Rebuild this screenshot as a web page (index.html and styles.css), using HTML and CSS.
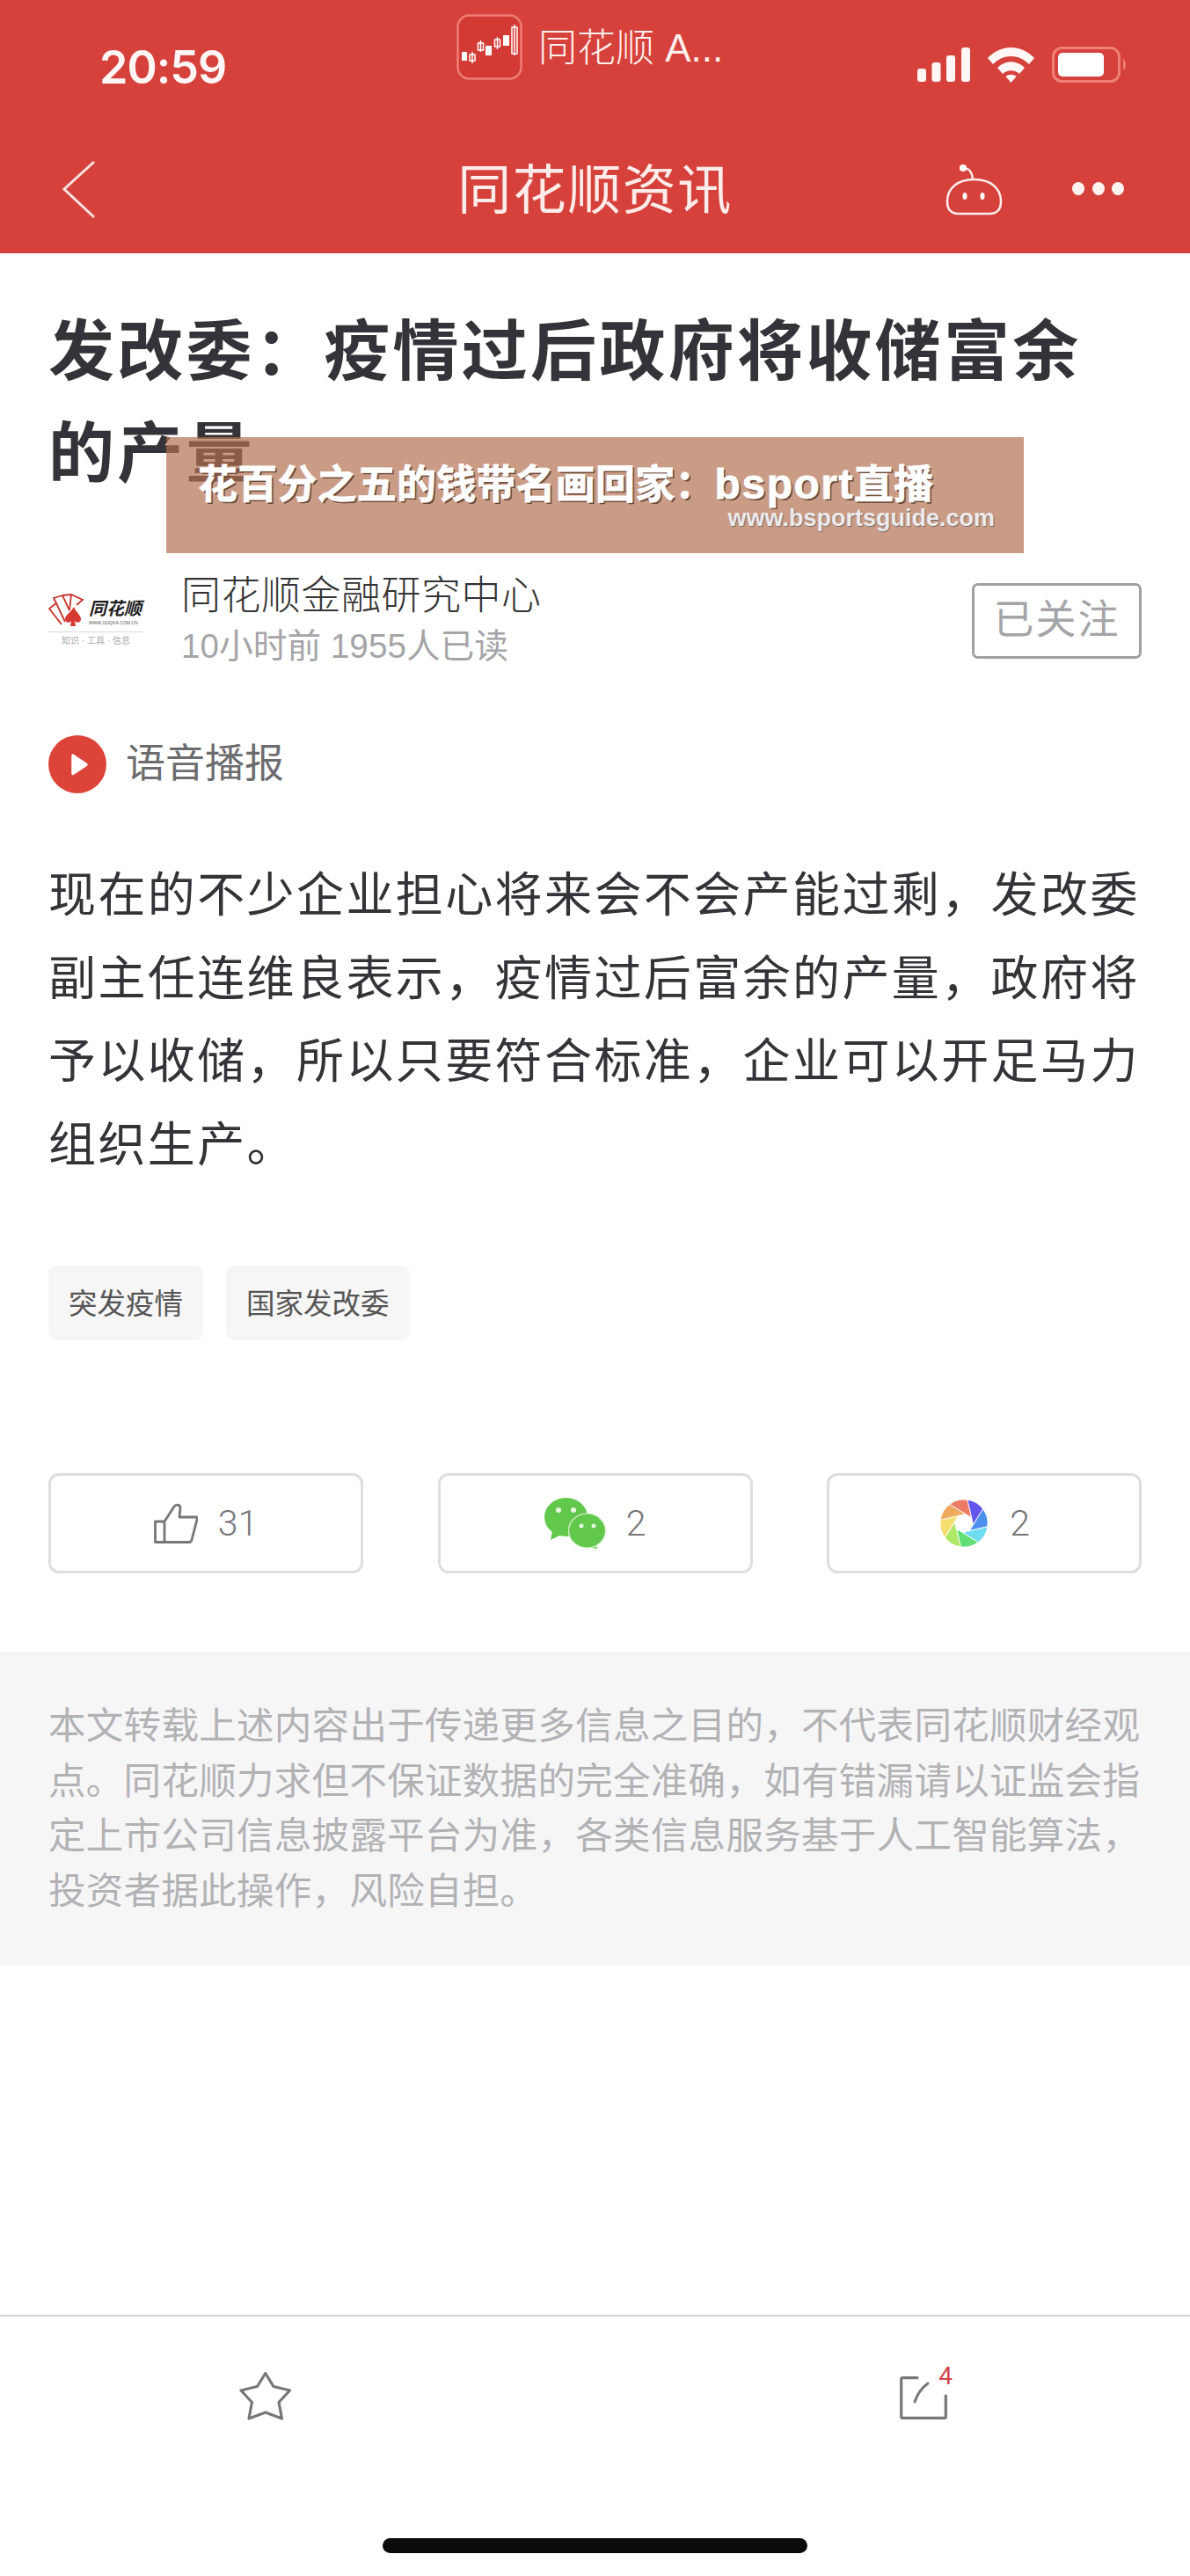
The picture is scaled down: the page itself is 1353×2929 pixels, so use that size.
FILE: index.html
```html
<!DOCTYPE html>
<html lang="zh-CN">
<head>
<meta charset="utf-8">
<title>同花顺资讯</title>
<link rel="stylesheet" href="styles.css">
</head>
<body>
<div class="page">
  <header class="topbar">
    <div class="status">
      <div class="time-cell"><span class="time">20:59</span></div>
      <div class="pip">
        <svg class="pip-icon" viewBox="0 0 75 75">
          <rect x="1.500" y="1.500" width="72" height="72" rx="13" fill="#d43a34" stroke="#ee7d76" stroke-width="2.500"/>
          <g fill="none" stroke="#fff" stroke-width="1.500">
            <path d="M18 43v13M27.500 30v13M46.500 26v14M66 12v35"/>
            <rect x="15" y="46" width="6" height="7"/>
            <rect x="24.500" y="33" width="6" height="8"/>
            <rect x="43.500" y="29" width="6" height="8"/>
            <rect x="63" y="15" width="6" height="30"/>
          </g>
          <g fill="#fff">
            <rect x="6" y="43" width="6" height="10"/>
            <rect x="33" y="36" width="7" height="11"/>
            <rect x="53" y="24" width="7" height="12"/>
          </g>
        </svg>
        <span class="pip-text">同花顺 A...</span>
      </div>
      <div class="status-icons">
        <svg class="signal" viewBox="0 0 60 40"><rect x="0" y="25" width="10" height="15" rx="3"/><rect x="16.500" y="18" width="10" height="22" rx="3"/><rect x="33" y="10" width="10" height="30" rx="3"/><rect x="50" y="1" width="10" height="39" rx="3"/></svg>
        <svg class="wifi" viewBox="0 0 53 41"><path d="M0 13C15-3 38-3 53 13l-6 7C35 8 18 8 6 20Z"/><path d="M11 24c9-9 22-9 31 0l-6 7c-5-5-14-5-19 0Z"/><path d="M20.500 34c3.500-3 8.500-3 12 0l-6 7Z"/></svg>
        <svg class="battery" viewBox="0 0 86 41"><rect x="1.500" y="1.500" width="75" height="38" rx="10" fill="none" stroke="#ee8078" stroke-width="3"/><rect x="7" y="7" width="52" height="27" rx="5" fill="#fff"/><path d="M81 14c4 3 4 10 0 13Z" fill="#ee8078"/></svg>
      </div>
    </div>
    <nav class="navbar">
      <div class="nav-left">
        <svg class="back" viewBox="0 0 38 68"><path d="M36 2 2 33l34 32" fill="none" stroke="#fbe3e1" stroke-width="3"/></svg>
      </div>
      <h1 class="nav-title">同花顺资讯</h1>
      <div class="nav-actions">
        <svg class="robot" viewBox="0 0 65 58"><g fill="none" stroke="#fdeeed" stroke-width="2.500"><path d="M20 4c7 0 10 4 11 13"/><path d="M2 42C2 26 15 17 32.500 17S63 26 63 42c0 10-5 14-13 14H15C7 56 2 52 2 42Z"/></g><circle cx="20" cy="4" r="4" fill="#fff"/><ellipse cx="22" cy="36" rx="2.500" ry="4" fill="#fff"/><ellipse cx="42" cy="36" rx="2.500" ry="4" fill="#fff"/></svg>
        <div class="dots"><i></i><i></i><i></i></div>
      </div>
    </nav>
  </header>

  <main class="article">
    <h2 class="headline">发改委：疫情过后政府将收储富余的产量</h2>
    <div class="author-row">
      <div class="logo">
        <div class="logo-top">
          <svg class="logo-fan" viewBox="0 0 42 38"><g fill="none" stroke="#c8332c" stroke-width="1.800"><path d="M15 35 1 17l8-6 10 21"/><path d="M9 11 6 5l10-3 8 17"/><path d="M16 2l10-1 13 6-7 6"/><path d="M24 19 26 1"/></g><path d="M29 15c2 6 8 9 8 14 0 4-5 5-7 2l1 6h-6l1-6c-2 3-7 2-7-2 0-5 7-8 10-14Z" fill="#d63a32"/></svg>
          <div class="logo-name">
            <span class="logo-brand">同花顺</span>
            <span class="logo-url">WWW.10JQKA.COM.CN</span>
          </div>
        </div>
        <div class="logo-tag">知识 · 工具 · 信息</div>
      </div>
      <div class="author-info">
        <div class="author-name">同花顺金融研究中心</div>
        <div class="author-meta">10小时前 1955人已读</div>
      </div>
      <button class="follow">已关注</button>
    </div>
    <div class="voice">
      <span class="play"><svg viewBox="0 0 16 20"><path d="M1 1.500c0-1 1-1.500 2-1l12 8c1 .7 1 2 0 2.700l-12 8c-1 .5-2 0-2-1Z" fill="#fff"/></svg></span>
      <span class="voice-text">语音播报</span>
    </div>
    <p class="body">现在的不少企业担心将来会不会产能过剩，发改委副主任连维良表示，疫情过后富余的产量，政府将予以收储，所以只要符合标准，企业可以开足马力组织生产。</p>
    <div class="tags">
      <span class="tag">突发疫情</span>
      <span class="tag">国家发改委</span>
    </div>
    <div class="actions">
      <div class="action">
        <svg class="thumb" viewBox="0 0 50 46"><path d="M1.500 21H12V44.500H1.500ZM12 21 23 4c2-3 7-2.500 7 1.500L29 16h19c1 0 1.500.6 1.300 1.500L43 42c-.3 1.500-1 2.500-3 2.500H12" fill="none" stroke="#77777a" stroke-width="2.800" stroke-linejoin="round"/></svg>
        <span class="count">31</span>
      </div>
      <div class="action">
        <svg class="wechat" viewBox="0 0 70 59"><g fill="#62c84c"><ellipse cx="24.500" cy="22" rx="24.500" ry="22"/><path d="M9 38l-2 10 12-6Z"/></g><g fill="#62c84c" stroke="#dcf3d2" stroke-width="1.200"><path d="M58 53l3 6-10-3Z"/><ellipse cx="48.500" cy="37.500" rx="21" ry="19.500"/></g><g fill="#e9f8e2"><circle cx="16" cy="14" r="3"/><circle cx="33" cy="14" r="3"/><circle cx="42" cy="32" r="2.500"/><circle cx="56" cy="32" r="2.500"/></g></svg>
        <span class="count">2</span>
      </div>
      <div class="action">
        <svg class="shutter" viewBox="0 0 60 60">
          <g stroke="#fff" stroke-width=".8">
            <path d="M30 2A28 28 0 0 1 49.800 10.200L41 30Z" fill="#6455ec" transform="rotate(8 30 30)"/>
            <path d="M30 2A28 28 0 0 1 49.800 10.200L41 30Z" fill="#4c8fef" transform="rotate(53 30 30)"/>
            <path d="M30 2A28 28 0 0 1 49.800 10.200L41 30Z" fill="#6fdcf4" transform="rotate(98 30 30)"/>
            <path d="M30 2A28 28 0 0 1 49.800 10.200L41 30Z" fill="#62de77" transform="rotate(143 30 30)"/>
            <path d="M30 2A28 28 0 0 1 49.800 10.200L41 30Z" fill="#aee768" transform="rotate(188 30 30)"/>
            <path d="M30 2A28 28 0 0 1 49.800 10.200L41 30Z" fill="#f5de70" transform="rotate(233 30 30)"/>
            <path d="M30 2A28 28 0 0 1 49.800 10.200L41 30Z" fill="#eeaa5e" transform="rotate(278 30 30)"/>
            <path d="M30 2A28 28 0 0 1 49.800 10.200L41 30Z" fill="#ea7d64" transform="rotate(323 30 30)"/>
          </g>
        </svg>
        <span class="count">2</span>
      </div>
    </div>
  </main>

  <section class="disclaimer">本文转载上述内容出于传递更多信息之目的，不代表同花顺财经观点。同花顺力求但不保证数据的完全准确，如有错漏请以证监会指定上市公司信息披露平台为准，各类信息服务基于人工智能算法，投资者据此操作，风险自担。</section>

  <div class="spacer"></div>

  <footer class="bottombar">
    <div class="bottom-icons">
      <svg class="star" viewBox="0 0 60 57"><path d="M29.800 2.500 39 17.500 57.500 22 45 35.500 48.500 54 29.800 47 11 54 14.500 35.500 2 22 20.500 17.500Z" fill="none" stroke="#77777a" stroke-width="3.200" stroke-linejoin="round"/></svg>
      <div class="share">
        <svg class="share-icon" viewBox="0 0 54 49"><path d="M20 1.700H3a1.300 1.300 0 0 0-1.300 1.300V46A1.300 1.300 0 0 0 3 47.300H51a1.300 1.300 0 0 0 1.300-1.300V22" fill="none" stroke="#77777a" stroke-width="3.200" stroke-linecap="round"/><path d="M17 29c3-9 8-16 15-21" fill="none" stroke="#77777a" stroke-width="3" stroke-linecap="round"/></svg>
        <span class="badge">4</span>
      </div>
    </div>
    <div class="home-indicator"></div>
  </footer>

  <aside class="overlay">
    <div class="overlay-title">花百分之五的钱带名画回家：<span class="overlay-latin">bsport</span>直播</div>
    <div class="overlay-url">www.bsportsguide.com</div>
  </aside>
</div>
</body>
</html>
```

FILE: styles.css
```css
* { box-sizing: border-box; }
html, body { margin: 0; padding: 0; }
body { font-family: "Liberation Sans", "Noto Sans CJK SC", sans-serif; background: #fff; color: #333; }
.page { position: relative; width: 1353px; height: 2929px; display: flex; flex-direction: column; overflow: hidden; }

.topbar { height: 288px; background: #d6423b; flex: none; color: #fff; }
.status { height: 140px; display: flex; align-items: flex-start; }
.time-cell { width: 519px; flex: none; padding: 47px 0 0 113px; }
.time { display: block; font-size: 52px; line-height: 60px; font-weight: 600; color: #fff6f5; font-family: "Inter", "Liberation Sans", sans-serif; letter-spacing: -1px; }
.pip { width: 524px; flex: none; margin-top: 16px; display: flex; align-items: center; gap: 18px; height: 75px; }
.pip-icon { width: 75px; height: 75px; display: block; flex: none; }
.pip-text { font-size: 44px; line-height: 60px; color: #fff0ee; font-weight: 300; white-space: nowrap; padding-top: 2px; }
.status-icons { margin-top: 53px; display: flex; align-items: flex-start; gap: 20px; }
.signal { width: 60px; height: 40px; fill: #fff6f5; display: block; }
.wifi { width: 53px; height: 41px; fill: #fff6f5; display: block; }
.battery { width: 86px; height: 41px; display: block; }

.navbar { height: 148px; display: grid; grid-template-columns: 1fr auto 1fr; }
.nav-left { padding: 42px 0 0 71px; }
.back { width: 38px; height: 68px; display: block; }
.nav-title { margin: 0; font-size: 61px; font-weight: 400; line-height: 80px; color: #fdecea; padding-top: 37px; letter-spacing: 1.500px; }
.nav-actions { padding: 47px 75px 0 0; display: flex; justify-content: flex-end; align-items: flex-start; gap: 79px; }
.robot { width: 65px; height: 58px; display: block; }
.dots { display: flex; gap: 8.500px; margin-top: 20px; }
.dots i { display: block; width: 14px; height: 15px; border-radius: 50%; background: #fff3f2; }

.article { padding: 0 55px; flex: none; }
.headline { margin: 54px 0 0; font-size: 75px; line-height: 116px; font-weight: 700; color: #333338; letter-spacing: 3.300px; }
.author-row { display: flex; align-items: flex-start; margin-top: 76px; }
.logo { width: 108px; flex: none; margin-top: 25px; display: flex; flex-direction: column; }
.logo-top { display: flex; align-items: flex-start; gap: 4px; }
.logo-fan { width: 42px; height: 38px; flex: none; display: block; }
.logo-name { display: flex; flex-direction: column; line-height: 1; padding-top: 7px; }
.logo-brand { font-size: 20px; line-height: 21px; font-weight: 700; font-style: italic; color: #222; white-space: nowrap; }
.logo-url { font-size: 5px; line-height: 6px; color: #555; white-space: nowrap; margin-top: 2px; }
.logo-tag { border-top: 1px solid #d8d8d8; margin-top: 5px; padding-top: 3px; font-size: 10px; line-height: 13px; color: #aaa; text-align: center; white-space: nowrap; }
.author-info { margin-left: 43px; display: flex; flex-direction: column; }
.author-name { font-size: 45px; line-height: 56px; color: #333; font-weight: 300; letter-spacing: .5px; }
.author-meta { font-size: 38.700px; line-height: 48px; color: #a5a5a8; margin-top: 5px; }
.follow { margin-left: auto; margin-top: 13px; width: 193px; height: 86px; border: 3px solid #a0a0a2; border-radius: 7px; background: #fff; color: #a5a5a7; font: inherit; font-size: 46px; letter-spacing: 2px; padding: 0 0 12px; }

.voice { display: flex; align-items: center; gap: 22px; margin-top: 77px; }
.play { width: 66px; height: 66px; border-radius: 50%; background: #dc4339; display: flex; align-items: center; justify-content: center; padding-left: 4px; }
.play svg { width: 20px; height: 25px; display: block; }
.voice-text { font-size: 45px; line-height: 66px; color: #6c6c6f; }

.body { margin: 69px 0 0; font-size: 54px; line-height: 94.600px; color: #333338; letter-spacing: 2.400px; }

.tags { display: flex; gap: 26px; margin-top: 90px; }
.tag { height: 85px; padding: 0 23px 5px; display: flex; align-items: center; background: #f7f6f6; border-radius: 9px; font-size: 32.500px; color: #555; }

.actions { display: flex; justify-content: space-between; margin-top: 151px; }
.action { width: 358px; height: 114px; border: 3px solid #dedede; border-radius: 12px; display: flex; align-items: center; justify-content: center; gap: 23px; }
.thumb { width: 50px; height: 46px; }
.wechat { width: 70px; height: 59px; }
.shutter { width: 58px; height: 58px; }
.count { font-family: "Roboto", "Liberation Sans", sans-serif; font-size: 41px; line-height: 50px; color: #77777a; font-weight: 300; }

.disclaimer { margin-top: 89px; background: #f6f6f7; padding: 54px 55px 0; font-size: 42.500px; line-height: 62.400px; color: #b2b2b5; height: 357px; flex: none; letter-spacing: .3px; }

.spacer { flex: 1; }

.bottombar { height: 297px; flex: none; border-top: 2px solid #d2d2d4; display: flex; flex-direction: column; }
.bottom-icons { display: flex; justify-content: space-between; align-items: flex-start; padding: 62px 276px 0 272px; height: 118px; flex: none; }
.star { width: 60px; height: 57px; display: block; }
.share { position: relative; width: 54px; height: 49px; margin-top: 6px; }
.share-icon { width: 54px; height: 49px; display: block; }
.badge { position: absolute; right: -6px; top: -13px; font-size: 28px; line-height: 26px; color: #d2444a; font-family: "Roboto", "Liberation Sans", sans-serif; background: #fff; padding-left: 3px; }
.home-indicator { width: 483px; height: 17px; border-radius: 9px; background: #0c0c0c; margin: 134px auto 0; }

.overlay { position: absolute; left: 189px; top: 497px; width: 975px; height: 132px; background: rgba(180, 112, 78, .69); padding-top: 26px; }
.overlay-title { padding-left: 36px; font-size: 45px; line-height: 56px; font-weight: 700; color: #fff; white-space: nowrap; letter-spacing: .2px; -webkit-text-stroke: .8px #fff; text-shadow: 2px 2px 0 #6b4a3a; }
.overlay-latin { font-size: 48px; letter-spacing: 1.500px; }
.overlay-url { margin-top: -7px; padding-right: 33px; text-align: right; font-size: 27px; line-height: 32px; font-weight: 700; color: #eceaea; white-space: nowrap; text-shadow: 1px 1px 1px #6d6a6a; }
```
